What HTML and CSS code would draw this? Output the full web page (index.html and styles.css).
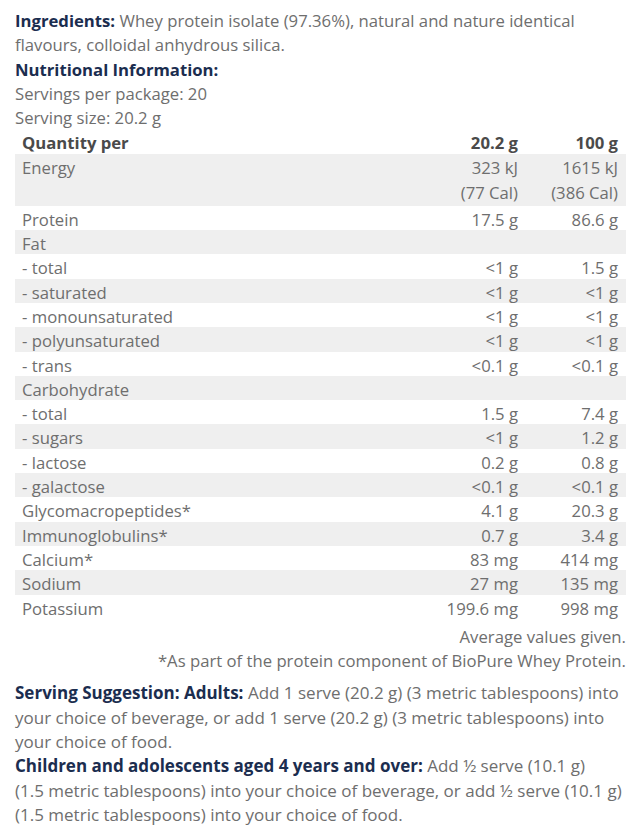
FILE: index.html
```html
<!DOCTYPE html>
<html>
<head>
<meta charset="utf-8">
<link rel="stylesheet" href="styles.css">
</head>
<body>
<div class="page">
  <p class="para"><span class="hd">Ingredients:</span> Whey protein isolate (97.36%), natural and nature identical flavours, colloidal anhydrous silica.</p>
  <p class="para hd">Nutritional Information:</p>
  <p class="para">Servings per package: 20</p>
  <p class="para">Serving size: 20.2 g</p>
  <table class="nip">
    <thead>
      <tr><th class="lbl">Quantity per</th><th class="c1">20.2 g</th><th class="c2">100 g</th></tr>
    </thead>
    <tbody>
      <tr class="alt tall"><td>Energy</td><td class="c1">323 kJ<br>(77 Cal)</td><td class="c2">1615 kJ<br>(386 Cal)</td></tr>
      <tr><td>Protein</td><td class="c1">17.5 g</td><td class="c2">86.6 g</td></tr>
      <tr class="alt"><td>Fat</td><td class="c1"></td><td class="c2"></td></tr>
      <tr><td>- total</td><td class="c1">&lt;1 g</td><td class="c2">1.5 g</td></tr>
      <tr class="alt"><td>- saturated</td><td class="c1">&lt;1 g</td><td class="c2">&lt;1 g</td></tr>
      <tr><td>- monounsaturated</td><td class="c1">&lt;1 g</td><td class="c2">&lt;1 g</td></tr>
      <tr class="alt"><td>- polyunsaturated</td><td class="c1">&lt;1 g</td><td class="c2">&lt;1 g</td></tr>
      <tr><td>- trans</td><td class="c1">&lt;0.1 g</td><td class="c2">&lt;0.1 g</td></tr>
      <tr class="alt"><td>Carbohydrate</td><td class="c1"></td><td class="c2"></td></tr>
      <tr><td>- total</td><td class="c1">1.5 g</td><td class="c2">7.4 g</td></tr>
      <tr class="alt"><td>- sugars</td><td class="c1">&lt;1 g</td><td class="c2">1.2 g</td></tr>
      <tr><td>- lactose</td><td class="c1">0.2 g</td><td class="c2">0.8 g</td></tr>
      <tr class="alt"><td>- galactose</td><td class="c1">&lt;0.1 g</td><td class="c2">&lt;0.1 g</td></tr>
      <tr><td>Glycomacropeptides*</td><td class="c1">4.1 g</td><td class="c2">20.3 g</td></tr>
      <tr class="alt"><td>Immunoglobulins*</td><td class="c1">0.7 g</td><td class="c2">3.4 g</td></tr>
      <tr><td>Calcium*</td><td class="c1">83 mg</td><td class="c2">414 mg</td></tr>
      <tr class="alt"><td>Sodium</td><td class="c1">27 mg</td><td class="c2">135 mg</td></tr>
      <tr><td>Potassium</td><td class="c1">199.6 mg</td><td class="c2">998 mg</td></tr>
    </tbody>
  </table>
  <div class="notes">
    <p class="para note">Average values given.</p>
    <p class="para note">*As part of the protein component of BioPure Whey Protein.</p>
  </div>
  <div class="serving">
    <p class="para"><span class="hd">Serving Suggestion: Adults:</span> Add 1 serve (20.2 g) (3 metric tablespoons) into your choice of beverage, or add 1 serve (20.2 g) (3 metric tablespoons) into your choice of food.</p>
    <p class="para"><span class="hd">Children and adolescents aged 4 years and over:</span> Add ½ serve (10.1&nbsp;g)<br>(1.5 metric tablespoons) into your choice of beverage, or add ½ serve (10.1&nbsp;g) (1.5 metric tablespoons) into your choice of food.</p>
  </div>
</div>
</body>
</html>
```
FILE: styles.css
```css
html, body {
  margin: 0;
  padding: 0;
  background: #ffffff;
}
body {
  font-family: "Open Sans", "Liberation Sans", sans-serif;
  font-size: 16.7px;
  color: #6e6e6e;
}
.page {
  padding: 9px 15px 0 15px;
  width: 611px;
}
.para {
  margin: 0;
  line-height: 24.3px;
}
.hd {
  font-weight: 700;
  color: #1b2d4f;
}
.nip {
  width: 611px;
  border-collapse: collapse;
  margin-top: -1px;
}
.nip th, .nip td {
  padding: 4px 0 0 0;
  height: 20.3px;
  line-height: 20.3px;
  vertical-align: top;
}
.nip th {
  font-weight: 700;
  color: #4a4a4a;
  text-align: left;
}
.nip .lbl, .nip td:first-child {
  padding-left: 7px;
}
.nip .c1 {
  text-align: right;
  width: 110px;
}
.nip .c2 {
  text-align: right;
  width: 100px;
  padding-right: 8px;
}
.nip tr.alt td {
  background: #efefef;
}
.nip tr.tall td {
  padding-top: 1px;
  line-height: 25.5px;
  height: 51px;
}
.notes {
  margin-top: 6px;
}
.note {
  text-align: right;
}
.serving {
  margin-top: 8px;
  font-size: 17px;
}
```
